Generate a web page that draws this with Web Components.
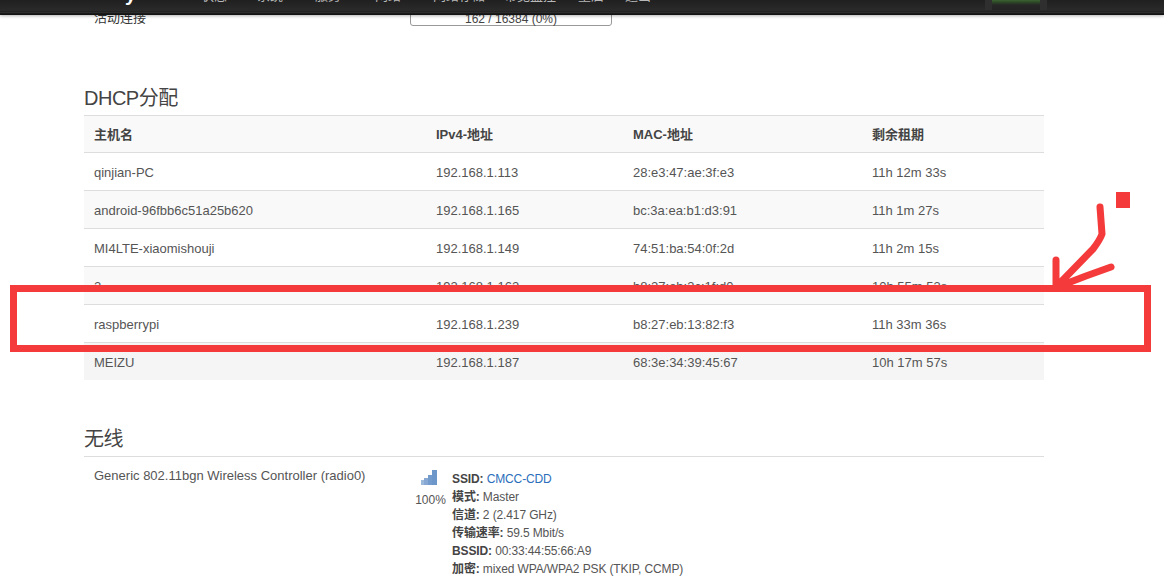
<!DOCTYPE html>
<html lang="zh">
<head>
<meta charset="utf-8">
<title>DHCP</title>
<style>
   html, body { margin: 0; height: 577px; overflow: hidden; background: #fff; }
   body { font: 13px "Liberation Sans", "Noto Sans CJK SC", sans-serif; color: #555; }
</style>
</head>
<body>
<luci-navbar>
   <span slot="brand">y</span>
   <span>状态</span>
   <span style="margin-left:30px">系统</span>
   <span style="margin-left:32px">服务</span>
   <span style="margin-left:34px">网络</span>
   <span style="margin-left:32px">网络存储</span>
   <span style="margin-left:19px">带宽监控</span>
   <span style="margin-left:22px">重启</span>
   <span style="margin-left:21px">退出</span>
</luci-navbar>
<luci-page>
   <conn-row label="活动连接" value="162 / 16384 (0%)"></conn-row>
   <luci-section heading="DHCP分配" top="60" gap="5">
      <lease-row head host="主机名" ip="IPv4-地址" mac="MAC-地址" left="剩余租期"></lease-row>
      <lease-row host="qinjian-PC" ip="192.168.1.113" mac="28:e3:47:ae:3f:e3" left="11h 12m 33s"></lease-row>
      <lease-row odd host="android-96fbb6c51a25b620" ip="192.168.1.165" mac="bc:3a:ea:b1:d3:91" left="11h 1m 27s"></lease-row>
      <lease-row host="MI4LTE-xiaomishouji" ip="192.168.1.149" mac="74:51:ba:54:0f:2d" left="11h 2m 15s"></lease-row>
      <lease-row odd host="2" ip="192.168.1.162" mac="b8:27:eb:3c:1f:d0" left="10h 55m 53s"></lease-row>
      <lease-row host="raspberrypi" ip="192.168.1.239" mac="b8:27:eb:13:82:f3" left="11h 33m 36s"></lease-row>
      <lease-row last host="MEIZU" ip="192.168.1.187" mac="68:3e:34:39:45:67" left="10h 17m 57s"></lease-row>
   </luci-section>
   <luci-section heading="无线" top="47" gap="5">
      <wifi-status name="Generic 802.11bgn Wireless Controller (radio0)">
         <wifi-line label="SSID"><a>CMCC-CDD</a></wifi-line>
         <wifi-line label="模式">Master</wifi-line>
         <wifi-line label="信道">2 (2.417 GHz)</wifi-line>
         <wifi-line label="传输速率">59.5 Mbit/s</wifi-line>
         <wifi-line label="BSSID">00:33:44:55:66:A9</wifi-line>
         <wifi-line label="加密">mixed WPA/WPA2 PSK (TKIP, CCMP)</wifi-line>
      </wifi-status>
   </luci-section>
</luci-page>
<red-markup></red-markup>

<script>
   // the page is photographed scrolled down, the bar stays on top and cuts its own labels
   class LuciNavbar extends HTMLElement {
      constructor() {
         super();
         this.attachShadow({ mode: "open" }).innerHTML = `
            <style>
               :host {
                  position: absolute; top: 0; left: 0; right: 0; z-index: 2;
                  display: flex; align-items: flex-end;
                  height: 15px; box-sizing: border-box; padding-bottom: 9px;
                  background: linear-gradient(#202020, #2a2a2a 70%, #222 78%, #333 82%, #1c1c1c 88%, #111);
                  box-shadow: 0 1px 3px rgba(0, 0, 0, .3);
                  color: #b8b8b8; line-height: 20px;
               }
               #brand { font-size: 20px; font-weight: bold; color: #fff; margin: 0 66px 2px 125px; width: 10px; }
               #items { display: flex; }
               #badge {
                  position: absolute; left: 985px; top: 0; width: 48px; height: 10px;
                  border: solid #2f2f2f; border-width: 0 7px;
                  background: linear-gradient(#3a6230, #2c4526 25%, #262626 50%, #232323);
               }
            </style>
            <div id="brand"><slot name="brand"></slot></div>
            <div id="items"><slot></slot></div>
            <div id="badge"></div>`;
      }
   }

   class LuciPage extends HTMLElement {
      constructor() {
         super();
         this.attachShadow({ mode: "open" }).innerHTML = `
            <style>
               :host { display: block; width: 960px; padding-left: 84px; }
            </style>
            <slot></slot>`;
      }
   }

   class ConnRow extends HTMLElement {
      constructor() {
         super();
         this.attachShadow({ mode: "open" }).innerHTML = `
            <style>
               :host { display: flex; padding: 12px 0 0 10px; color: #333; font-size: 12px; line-height: 12px; }
               #label { width: 316px; font-size: 13px; }
               #bar {
                  box-sizing: border-box; width: 202px; height: 14px;
                  border: 1px solid #999; border-radius: 3px;
                  text-align: center; color: #444;
               }
            </style>
            <div id="label"></div>
            <div id="bar"></div>`;
      }

      connectedCallback() {
         this.shadowRoot.getElementById("label").textContent = this.getAttribute("label");
         this.shadowRoot.getElementById("bar").textContent = this.getAttribute("value");
      }
   }

   class LuciSection extends HTMLElement {
      constructor() {
         super();
         this.attachShadow({ mode: "open" }).innerHTML = `
            <style>
               :host { display: block; }
               h2 { margin: 0; font-size: 20px; font-weight: normal; line-height: 24px; letter-spacing: -.5px; color: #444; }
               #body { border-top: 1px solid #ddd; }
            </style>
            <h2></h2>
            <div id="body"><slot></slot></div>`;
      }

      connectedCallback() {
         const h2 = this.shadowRoot.querySelector("h2");
         h2.textContent = this.getAttribute("heading");
         h2.style.marginTop = this.getAttribute("top") + "px";
         h2.style.marginBottom = this.getAttribute("gap") + "px";
      }
   }

   class LeaseRow extends HTMLElement {
      constructor() {
         super();
         this.attachShadow({ mode: "open" }).innerHTML = `
            <style>
               :host {
                  display: grid; grid-template-columns: 342px 197px 239px 182px;
                  box-sizing: border-box; height: 38px; padding-top: 2px; align-items: center;
                  border-bottom: 1px solid #ddd;
               }
               :host([odd]), :host([head]) { background: #f9f9f9; }
               :host([head]) { height: 37px; padding: 0 0 2px; font-weight: bold; color: #444; }
               :host([last]) { height: 37px; padding-top: 1px; background: #f5f5f5; border-bottom: 0; }
               div { padding-left: 10px; }
            </style>
            <div id="host"></div><div id="ip"></div><div id="mac"></div><div id="left"></div>`;
      }

      connectedCallback() {
         for (const key of ["host", "ip", "mac", "left"]) {
            this.shadowRoot.getElementById(key).textContent = this.getAttribute(key);
         }
      }
   }

   class WifiStatus extends HTMLElement {
      constructor() {
         super();
         this.attachShadow({ mode: "open" }).innerHTML = `
            <style>
               :host { display: flex; }
               #name { width: 321px; padding: 9px 0 0 10px; line-height: 20px; }
               #signal { width: 37px; margin-left: -3px; margin-right: 3px; padding-top: 13px; text-align: center; font-size: 12px; line-height: 14px; }
               #signal svg { display: block; margin: 0 0 8px 9px; }
               #lines { padding-top: 13px; font-size: 12px; line-height: 18px; letter-spacing: -.01em; }
            </style>
            <div id="name"></div>
            <div id="signal">
               <svg width="16" height="15" viewBox="0 0 16 15">
                  <rect x="0" y="10" width="3" height="5" fill="#9db9da"/>
                  <rect x="3" y="8" width="4" height="7" fill="#86a8d2"/>
                  <rect x="7" y="5" width="4" height="10" fill="#739bcb"/>
                  <rect x="11" y="0" width="5" height="15" fill="#6e97c9"/>
               </svg>
               100%
            </div>
            <div id="lines"><slot></slot></div>`;
      }

      connectedCallback() {
         this.shadowRoot.getElementById("name").textContent = this.getAttribute("name");
      }
   }

   class WifiLine extends HTMLElement {
      constructor() {
         super();
         this.attachShadow({ mode: "open" }).innerHTML = `
            <style>
               :host { display: block; white-space: nowrap; }
               b { color: #444; }
               ::slotted(a) { color: #2a6ebb; }
            </style>
            <b></b> <slot></slot>`;
      }

      connectedCallback() {
         this.shadowRoot.querySelector("b").textContent = this.getAttribute("label") + ":";
      }
   }

   // hand drawn frame, arrow and dot on top of the screenshot
   class RedMarkup extends HTMLElement {
      constructor() {
         super();
         this.attachShadow({ mode: "open" }).innerHTML = `
            <style>
               :host { position: absolute; inset: 0; z-index: 3; pointer-events: none; }
               svg { display: block; }
            </style>
            <svg width="1164" height="577" fill="none" stroke="#f43a3a">
               <rect x="13.5" y="288.5" width="1134" height="60" stroke-width="7"/>
               <rect x="1116" y="192" width="14" height="16" fill="#f43a3a" stroke="none"/>
               <path d="M1100 207 L1102 234 Q1100 240 1093 249 L1058 285 M1056 260 L1056 287 M1111 267 Q1085 276 1060 286"
                     stroke-width="7" stroke-linecap="round" stroke-linejoin="round"/>
            </svg>`;
      }
   }

   customElements.define("luci-navbar", LuciNavbar);
   customElements.define("luci-page", LuciPage);
   customElements.define("conn-row", ConnRow);
   customElements.define("luci-section", LuciSection);
   customElements.define("lease-row", LeaseRow);
   customElements.define("wifi-status", WifiStatus);
   customElements.define("wifi-line", WifiLine);
   customElements.define("red-markup", RedMarkup);
</script>
</body>
</html>
